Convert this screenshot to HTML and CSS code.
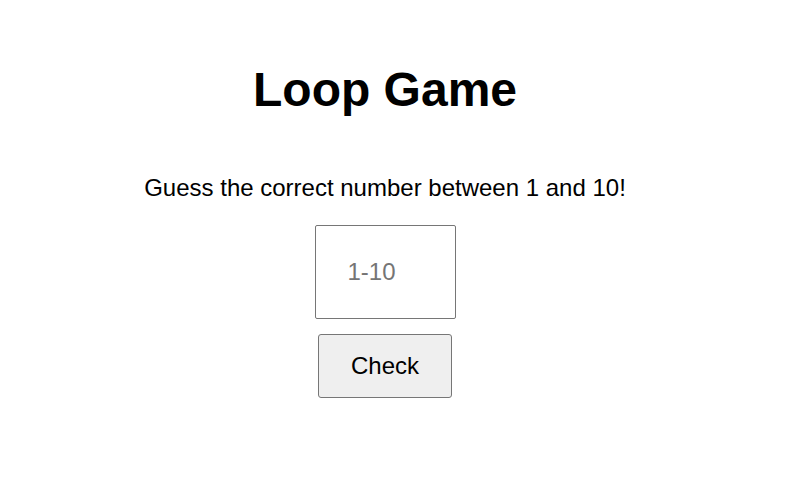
FILE: index.html
```html
<!DOCTYPE html>
<html lang="en">
<head>
<meta charset="utf-8">
<title>Loop Game</title>
<link rel="stylesheet" href="styles.css">
</head>
<body>
<main class="game">
  <h1 class="title">Loop Game</h1>
  <p class="prompt">Guess the correct number between 1 and 10!</p>
  <input class="guess" type="text" placeholder="1-10">
  <button class="check" type="button">Check</button>
</main>
</body>
</html>
```

FILE: styles.css
```css
html, body {
  margin: 0;
  padding: 0;
  background: #fff;
}
.game {
  width: 770px;
  display: flex;
  flex-direction: column;
  align-items: center;
  font-family: "Liberation Sans", Arial, sans-serif;
  color: #000;
}
.title {
  margin: 62px 0 0;
  font-size: 48px;
  line-height: 56px;
  font-weight: bold;
}
.prompt {
  margin: 56px 0 0;
  font-size: 24px;
  line-height: 28px;
}
.guess {
  box-sizing: border-box;
  margin-top: 23px;
  width: 141px;
  height: 94px;
  padding: 0 0 0 32px;
  border: 1px solid #767676;
  border-radius: 2px;
  font-family: "Liberation Sans", Arial, sans-serif;
  font-size: 24px;
  color: #000;
  outline: none;
}
.guess::placeholder {
  color: #757575;
}
.check {
  box-sizing: border-box;
  margin-top: 15px;
  width: 134px;
  height: 64px;
  background: #efefef;
  border: 1px solid #767676;
  border-radius: 3px;
  font-family: "Liberation Sans", Arial, sans-serif;
  font-size: 24px;
  color: #000;
}
```
